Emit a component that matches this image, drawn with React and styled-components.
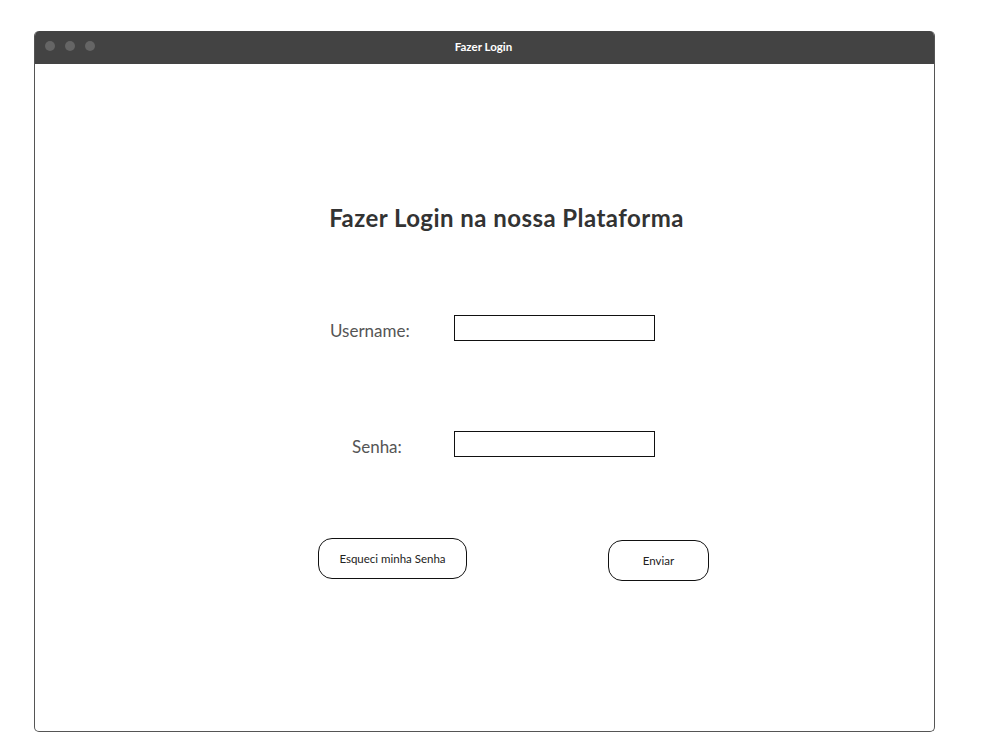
import styled, { createGlobalStyle } from 'styled-components';

const GlobalStyle = createGlobalStyle`
  html, body {
    margin: 0;
    padding: 0;
    background: #ffffff;
    font-family: 'Lato', 'Open Sans', sans-serif;
  }
`;

export default function App() {
  return (
    <>
      <GlobalStyle />
      <Window>
        <TitleBar>
          <Dots>
            <Dot />
            <Dot />
            <Dot />
          </Dots>
          <WindowTitle>Fazer Login</WindowTitle>
        </TitleBar>
        <Body>
          <Heading>Fazer Login na nossa Plataforma</Heading>
          <Form>
            <Row>
              <Label>Username:</Label>
              <Input type="text" />
            </Row>
            <Row $gap={90}>
              <Label $indent={22}>Senha:</Label>
              <Input type="password" />
            </Row>
            <Actions>
              <PillButton $width={149}>Esqueci minha Senha</PillButton>
              <PillButton $width={101} $drop={2}>Enviar</PillButton>
            </Actions>
          </Form>
        </Body>
      </Window>
    </>
  );
}

const Window = styled.div`
  box-sizing: border-box;
  width: 901px;
  height: 701px;
  margin: 31px 0 0 34px;
  border: 1px solid #555555;
  border-top: none;
  border-radius: 5px;
  overflow: hidden;
  display: flex;
  flex-direction: column;
  background: #ffffff;
`;

const TitleBar = styled.div`
  position: relative;
  height: 33px;
  margin: 0 -1px;
  background: #434343;
  display: flex;
  align-items: center;
  justify-content: center;
  border-radius: 5px 5px 0 0;
`;

const Dots = styled.div`
  position: absolute;
  left: 11px;
  top: 10px;
  display: flex;
  gap: 10px;
`;

const Dot = styled.span`
  width: 10px;
  height: 10px;
  border-radius: 50%;
  background: #656565;
`;

const WindowTitle = styled.div`
  color: #ffffff;
  font-size: 11.5px;
  font-weight: 700;
  margin-top: -3px;
  margin-right: 2px;
`;

const Body = styled.div`
  flex: 1;
  padding-top: 139px;
  display: flex;
  flex-direction: column;
`;

const Heading = styled.h1`
  margin: 0;
  padding-left: 44px;
  text-align: center;
  font-size: 24px;
  line-height: 30px;
  letter-spacing: 0.45px;
  font-weight: 700;
  color: #333333;
`;

const Form = styled.div`
  display: flex;
  flex-direction: column;
  padding-left: 283px;
`;

const Row = styled.div`
  display: grid;
  grid-template-columns: 124px 201px;
  align-items: center;
  padding-left: 12px;
  margin-top: ${(p) => p.$gap ?? 82}px;
`;

const Label = styled.label`
  padding-left: ${(p) => p.$indent ?? 0}px;
  font-size: 17px;
  color: #555555;
  margin-top: 4px;
`;

const Input = styled.input`
  box-sizing: border-box;
  width: 201px;
  height: 26px;
  margin: 0;
  border: 1px solid #111111;
  border-radius: 0;
  background: #ffffff;
  outline: none;
`;

const Actions = styled.div`
  display: flex;
  align-items: flex-start;
  gap: 141px;
  margin-top: 81px;
`;

const PillButton = styled.button`
  box-sizing: border-box;
  width: ${(p) => p.$width}px;
  height: 41px;
  margin-top: ${(p) => p.$drop ?? 0}px;
  border: 1px solid #111111;
  border-radius: 14px;
  background: #ffffff;
  font-family: 'Lato', 'Open Sans', sans-serif;
  font-size: 11.5px;
  color: #222222;
  padding: 0;
  cursor: pointer;
`;
